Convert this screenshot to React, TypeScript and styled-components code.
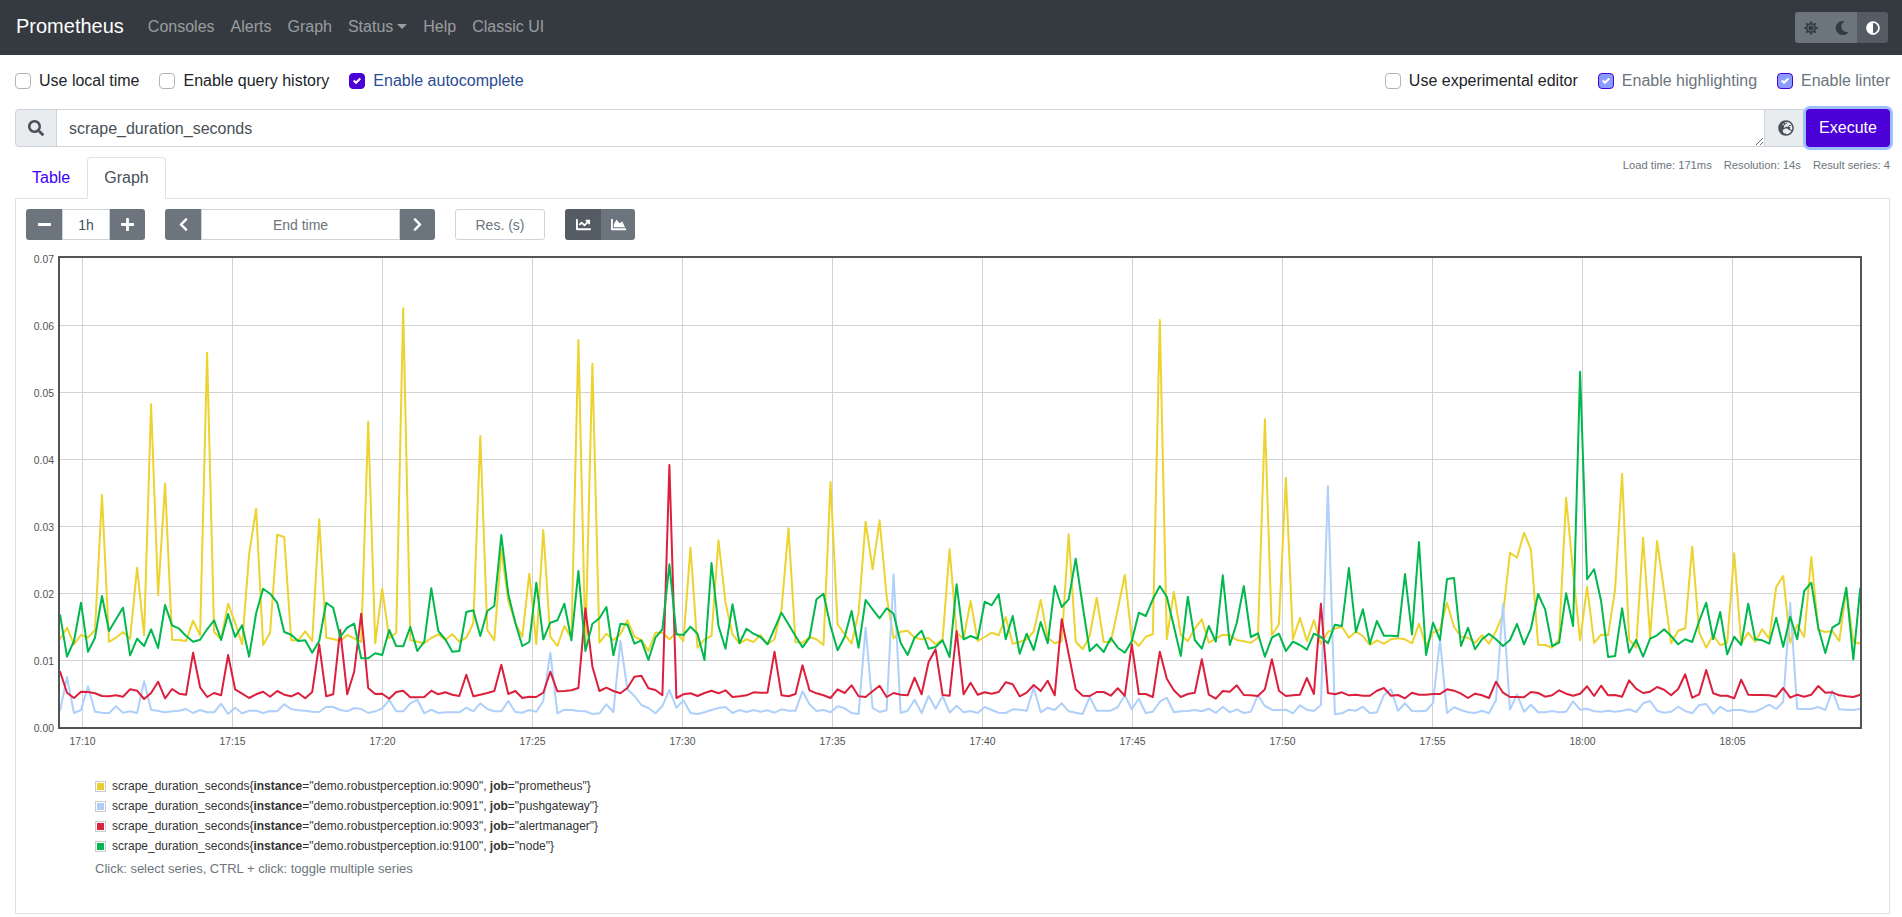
import styled, { createGlobalStyle } from 'styled-components'
import {
    FaAdjust,
    FaChartArea,
    FaChartLine,
    FaChevronLeft,
    FaChevronRight,
    FaGlobeEurope,
    FaMinus,
    FaMoon,
    FaPlus,
    FaSearch,
    FaSun,
} from 'react-icons/fa'

const GlobalStyle = createGlobalStyle`
    * {
        box-sizing: border-box;
    }
    body {
        margin: 0;
        background: #fff;
        color: #212529;
        font-family: "Liberation Sans", Arial, sans-serif;
        font-size: 16px;
        line-height: 1.5;
    }
`;

const Navbar = styled.nav`
    display: flex;
    align-items: center;
    height: 55px;
    padding: 0 14px 0 16px;
    background-color: #343a40;
`;

const Brand = styled.a`
    margin-right: 16px;
    margin-top: -3px;
    color: #fff;
    font-size: 20px;
    line-height: 30px;
`;

const NavLink = styled.a<{ $caret?: boolean }>`
    display: flex;
    align-items: center;
    padding: 0 8px;
    margin-top: -2px;
    color: rgba(255, 255, 255, 0.5);
    ${(p) => p.$caret && `
        &::after {
            content: '';
            margin-left: 4px;
            border-top: 5px solid currentColor;
            border-left: 5px solid transparent;
            border-right: 5px solid transparent;
        }
    `}
`;

const ThemeToggle = styled.div`
    display: flex;
    margin-left: auto;
    border-radius: 3px;
    overflow: hidden;
`;

const ThemeButton = styled.button<{ $active?: boolean }>`
    display: flex;
    align-items: center;
    justify-content: center;
    width: 31px;
    height: 31px;
    padding: 0;
    border: 0;
    background-color: ${(p) => (p.$active ? '#545b62' : '#6c757d')};
    color: ${(p) => (p.$active ? '#fff' : '#343a40')};
    font-size: 14px;
`;

const Main = styled.main`
    padding: 14px 12px 0 15px;
`;

const OptionsRow = styled.div`
    display: flex;
    justify-content: space-between;
    height: 24px;
`;

const OptionGroup = styled.div`
    display: flex;
    gap: 20px;
`;

const Option = styled.label<{ $color?: string }>`
    display: flex;
    align-items: center;
    gap: 8px;
    color: ${(p) => p.$color || '#212529'};
`;

const CheckBox = styled.span<{ $checked?: boolean; $disabled?: boolean }>`
    display: flex;
    align-items: center;
    justify-content: center;
    width: 16px;
    height: 16px;
    border-radius: 4px;
    border: 1px solid ${(p) => (p.$checked ? '#4a00d6' : '#adb5bd')};
    background-color: ${(p) => (p.$disabled ? '#8a9cff' : p.$checked ? '#4a00d6' : '#fff')};

    svg {
        width: 8px;
        height: 8px;
        fill: #fff;
    }
`;

const QueryRow = styled.div`
    display: flex;
    height: 38px;
    margin-top: 16px;
`;

const Addon = styled.div<{ $left?: boolean }>`
    display: flex;
    flex: none;
    align-items: center;
    justify-content: center;
    width: ${(p) => (p.$left ? '42px' : '41px')};
    border: 1px solid #ced4da;
    border-radius: ${(p) => (p.$left ? '4px 0 0 4px' : '0')};
    background-color: #e9ecef;
    color: #495057;
    ${(p) => (p.$left ? 'border-right-width: 1px;' : 'border-right: 0; border-left: 0;')}
`;

const QueryInput = styled.textarea`
    flex: 1;
    min-width: 0;
    height: 38px;
    padding: 7px 12px 5px;
    margin-left: -1px;
    border: 1px solid #ced4da;
    border-radius: 0;
    outline: 0;
    color: #495057;
    font: inherit;
    resize: vertical;
`;

const ExecuteButton = styled.button`
    position: relative;
    flex: none;
    width: 84px;
    height: 38px;
    border: 0;
    border-radius: 4px;
    background-color: #4a00d6;
    box-shadow: 0 0 0 3px #9dbffb;
    color: #fff;
    font: inherit;
`;

const TabRow = styled.div`
    display: flex;
    justify-content: space-between;
    margin-top: 10px;
    margin-bottom: -1px;
`;

const Tabs = styled.div`
    display: flex;
`;

const Tab = styled.a<{ $active?: boolean }>`
    position: relative;
    height: 42px;
    padding: 8px 16px;
    border: 1px solid ${(p) => (p.$active ? '#dee2e6' : 'transparent')};
    border-bottom-color: ${(p) => (p.$active ? '#fff' : 'transparent')};
    border-radius: 4px 4px 0 0;
    color: ${(p) => (p.$active ? '#495057' : '#4000ff')};
`;

const Stats = styled.div`
    display: flex;
    gap: 12px;
    color: #6c757d;
    font-size: 11.2px;
    line-height: 16px;
`;

const Panel = styled.section`
    height: 716px;
    padding: 10px;
    border: 1px solid #dee2e6;
`;

const Tools = styled.div`
    display: flex;
    gap: 20px;
    height: 31px;
`;

const ToolGroup = styled.div`
    display: flex;
`;

const ToolButton = styled.button<{ $active?: boolean; $wide?: number }>`
    display: flex;
    align-items: center;
    justify-content: center;
    width: ${(p) => p.$wide || 36}px;
    height: 31px;
    padding: 0;
    border: 0;
    background-color: ${(p) => (p.$active ? '#545b62' : '#6c757d')};
    color: #fff;
    font-size: 15px;

    &:first-child {
        border-radius: 3px 0 0 3px;
    }
    &:last-child {
        border-radius: 0 3px 3px 0;
    }
`;

const ToolInput = styled.input<{ $width: number; $alone?: boolean }>`
    width: ${(p) => p.$width}px;
    height: 31px;
    padding: 4px 8px;
    border: 1px solid #ced4da;
    border-radius: ${(p) => (p.$alone ? '3px' : '0')};
    outline: 0;
    color: #495057;
    font-family: inherit;
    font-size: 14px;
    text-align: center;

    &::placeholder {
        color: #6c757d;
        opacity: 1;
    }
`;

const ChartSvg = styled.svg`
    display: block;
    margin: 8px 0 0 -10px;
`;

const TickText = styled.text`
    fill: #545454;
    font-size: 10.4px;
`;

const Legend = styled.div`
    margin: 23px 0 0 69px;
    color: #333;
    font-size: 12px;
    line-height: 20px;
`;

const LegendRow = styled.div`
    display: flex;
    align-items: center;
    gap: 6px;
    height: 20px;
`;

const Swatch = styled.span<{ $color: string }>`
    width: 11px;
    height: 11px;
    padding: 1px;
    border: 1px solid #ccc;
    background-clip: content-box;
    background-color: ${(p) => p.$color};
`;

const LegendHint = styled.div`
    margin-top: 3px;
    color: #6c757d;
    font-size: 13px;
`;

// y of every sample as read off the reference, in 1/3 px below y=256
const yellow = [
    1150, 1115, 1165, 1137, 1145, 1122, 717, 1158, 1145, 1128,
    1148, 935, 1138, 445, 1017, 683, 1151, 1152, 1155, 1094,
    1138, 290, 1128, 1150, 1043, 1100, 1165, 895, 758, 1167,
    1130, 836, 843, 1153, 1153, 1126, 1155, 790, 1145, 1149,
    1155, 1137, 1147, 1158, 497, 1162, 998, 1147, 1130, 157,
    1152, 1157, 1162, 1146, 1135, 1152, 1135, 1157, 1145, 1102,
    540, 1122, 1153, 880, 1035, 1100, 1142, 953, 1165, 822,
    1142, 1170, 1110, 1147, 252, 1170, 323, 1160, 1133, 1152,
    1135, 1093, 1142, 1152, 1185, 1130, 1130, 1150, 1130, 1155,
    875, 1175, 1150, 1140, 853, 1040, 1135, 1162, 1150, 1158,
    1137, 1165, 1150, 1060, 817, 1158, 1160, 1143, 1150, 1167,
    678, 1105, 1135, 1163, 1070, 797, 940, 793, 1020, 1147,
    1127, 1124, 1145, 1150, 1146, 1165, 1150, 880, 1130, 1148,
    1035, 1155, 1143, 1130, 1138, 1083, 1163, 1158, 1150, 1127,
    1032, 1145, 1162, 1155, 835, 1157, 1180, 1140, 1025, 1158,
    1157, 1060, 957, 1148, 1170, 1142, 1135, 192, 1150, 1007,
    1137, 1156, 1118, 1090, 1160, 1148, 1136, 1138, 1152, 1156,
    1160, 1145, 490, 1138, 1105, 665, 1150, 1086, 1155, 1093,
    1163, 1128, 1118, 1112, 1145, 1127, 1140, 1167, 1153, 1163,
    1150, 1147, 1150, 1162, 1103, 1170, 1130, 1120, 1040, 1112,
    1142, 1145, 1160, 1138, 1163, 1125, 1075, 890, 905, 830,
    882, 1166, 1167, 1175, 1150, 725, 950, 1153, 992, 1161,
    1136, 1138, 1000, 653, 1150, 1175, 845, 1145, 855, 1005,
    1162, 1124, 1117, 872, 1130, 1175, 1137, 1168, 1160, 892,
    1163, 1130, 1157, 1120, 1148, 993, 960, 1160, 1107, 1143,
    903, 1122, 1128, 1125, 1155, 1000, 1157, 1163,
];

const blue = [
    1365, 1264, 1371, 1362, 1291, 1367, 1370, 1372, 1351, 1370,
    1366, 1371, 1276, 1361, 1365, 1369, 1366, 1364, 1359, 1371,
    1362, 1369, 1369, 1343, 1374, 1355, 1372, 1364, 1364, 1371,
    1365, 1366, 1345, 1359, 1363, 1364, 1367, 1368, 1352, 1353,
    1362, 1366, 1356, 1359, 1371, 1366, 1357, 1332, 1366, 1366,
    1342, 1331, 1372, 1361, 1371, 1369, 1369, 1369, 1355, 1366,
    1342, 1359, 1366, 1366, 1335, 1368, 1370, 1362, 1367, 1334,
    1190, 1372, 1361, 1362, 1365, 1366, 1374, 1372, 1345, 1368,
    1155, 1300, 1320, 1347, 1356, 1372, 1350, 1302, 1355, 1333,
    1371, 1374, 1369, 1362, 1356, 1353, 1371, 1362, 1368, 1362,
    1367, 1363, 1370, 1360, 1364, 1364, 1306, 1345, 1365, 1362,
    1369, 1351, 1357, 1371, 1374, 1115, 1356, 1368, 1363, 955,
    1371, 1364, 1331, 1371, 1320, 1358, 1320, 1370, 1349, 1369,
    1365, 1371, 1353, 1362, 1370, 1371, 1360, 1361, 1364, 1295,
    1369, 1355, 1362, 1342, 1366, 1370, 1374, 1323, 1364, 1364,
    1364, 1353, 1318, 1360, 1328, 1371, 1367, 1337, 1325, 1369,
    1366, 1365, 1362, 1366, 1358, 1371, 1352, 1369, 1360, 1371,
    1367, 1318, 1350, 1361, 1362, 1361, 1372, 1348, 1361, 1365,
    1347, 690, 1375, 1372, 1361, 1364, 1352, 1372, 1369, 1318,
    1300, 1364, 1342, 1365, 1366, 1364, 1342, 1150, 1371, 1354,
    1362, 1369, 1371, 1364, 1372, 1332, 1045, 1361, 1315, 1367,
    1346, 1369, 1369, 1365, 1369, 1367, 1336, 1361, 1358, 1366,
    1367, 1364, 1367, 1364, 1360, 1368, 1342, 1335, 1364, 1370,
    1367, 1352, 1365, 1372, 1347, 1344, 1373, 1352, 1365, 1362,
    1362, 1367, 1367, 1357, 1346, 1359, 1338, 1040, 1358, 1359,
    1359, 1353, 1362, 1305, 1360, 1361, 1362, 1358,
];

const red = [
    1246, 1310, 1326, 1307, 1308, 1312, 1320, 1321, 1318, 1322,
    1300, 1304, 1329, 1311, 1277, 1327, 1299, 1313, 1316, 1190,
    1294, 1323, 1311, 1318, 1197, 1300, 1313, 1326, 1315, 1307,
    1322, 1305, 1316, 1321, 1311, 1327, 1308, 1165, 1321, 1315,
    1122, 1315, 1247, 1073, 1296, 1314, 1313, 1328, 1308, 1304,
    1324, 1324, 1323, 1304, 1315, 1309, 1316, 1320, 1256, 1321,
    1316, 1311, 1305, 1226, 1314, 1305, 1326, 1322, 1323, 1310,
    1247, 1306, 1305, 1303, 1296, 1057, 1232, 1305, 1295, 1305,
    1312, 1296, 1262, 1259, 1297, 1302, 1318, 627, 1326, 1315,
    1312, 1320, 1311, 1304, 1312, 1303, 1323, 1321, 1318, 1309,
    1310, 1310, 1187, 1318, 1321, 1314, 1228, 1303, 1312, 1318,
    1326, 1300, 1311, 1288, 1321, 1323, 1306, 1289, 1323, 1311,
    1316, 1318, 1265, 1315, 1218, 1180, 1317, 1319, 1125, 1315,
    1280, 1316, 1309, 1313, 1308, 1279, 1285, 1321, 1310, 1287,
    1305, 1274, 1318, 1090, 1195, 1300, 1319, 1320, 1308, 1308,
    1319, 1297, 1319, 1165, 1314, 1314, 1323, 1187, 1268, 1303,
    1323, 1314, 1310, 1210, 1316, 1328, 1305, 1307, 1288, 1317,
    1318, 1320, 1300, 1210, 1304, 1320, 1318, 1316, 1266, 1314,
    1043, 1311, 1315, 1309, 1318, 1316, 1319, 1319, 1304, 1296,
    1319, 1317, 1327, 1310, 1316, 1316, 1314, 1314, 1300, 1304,
    1313, 1326, 1313, 1318, 1326, 1277, 1310, 1323, 1323, 1324,
    1308, 1311, 1322, 1318, 1303, 1313, 1319, 1313, 1291, 1320,
    1289, 1318, 1317, 1322, 1273, 1298, 1311, 1307, 1293, 1301,
    1318, 1299, 1255, 1325, 1315, 1242, 1312, 1319, 1319, 1327,
    1271, 1316, 1317, 1317, 1318, 1322, 1296, 1325, 1316, 1322,
    1316, 1290, 1310, 1309, 1318, 1321, 1323, 1316,
];

const green = [
    1075, 1202, 1155, 1040, 1187, 1145, 1020, 1125, 1090, 1055,
    1198, 1148, 1170, 1120, 1176, 1047, 1108, 1118, 1140, 1157,
    1151, 1120, 1093, 1152, 1074, 1143, 1108, 1202, 1072, 998,
    1013, 1040, 1128, 1136, 1155, 1153, 1190, 1155, 1040, 1055,
    1143, 1115, 1103, 1207, 1207, 1192, 1197, 1122, 1170, 1171,
    1113, 1185, 1157, 997, 1125, 1150, 1187, 1185, 1068, 1063,
    1140, 1065, 1050, 837, 1015, 1100, 1170, 1158, 980, 1150,
    1100, 1093, 1043, 1153, 945, 1185, 1103, 1087, 1053, 1198,
    1103, 1106, 1163, 1153, 1212, 1145, 1120, 925, 1135, 1137,
    1112, 1133, 1212, 921, 1110, 1178, 1045, 1162, 1118, 1133,
    1143, 1165, 1118, 1070, 1105, 1140, 1174, 1145, 1030, 1013,
    1110, 1183, 1143, 1065, 1175, 1032, 1060, 1087, 1057, 1073,
    1160, 1197, 1145, 1124, 1178, 1173, 1153, 1203, 985, 1150,
    1140, 1148, 1037, 1048, 1015, 1150, 1080, 1193, 1133, 1182,
    1098, 1162, 990, 1053, 1030, 908, 1050, 1185, 1165, 1188,
    1146, 1175, 1190, 1155, 1070, 1080, 1030, 990, 1022, 1110,
    1200, 1022, 1152, 1178, 1110, 1157, 958, 1167, 1100, 990,
    1143, 1132, 1202, 1145, 1133, 1185, 1157, 1167, 1181, 1133,
    1143, 1162, 1106, 1110, 936, 1128, 1060, 1163, 1095, 1139,
    1139, 1141, 954, 1135, 858, 1197, 1100, 1152, 969, 966,
    1170, 1115, 1180, 1150, 1133, 1150, 1170, 1152, 1104, 1165,
    1117, 1014, 1060, 1170, 1160, 1012, 1110, 347, 970, 940,
    1035, 1203, 1200, 1057, 1190, 1152, 1202, 1148, 1138, 1120,
    1140, 1165, 1150, 1158, 1095, 1040, 1150, 1068, 1195, 1142,
    1167, 1043, 1150, 1153, 1163, 1085, 1172, 1082, 1150, 1005,
    980, 1115, 1191, 1115, 1102, 995, 1210, 995,
];

const SERIES = [
    { color: '#ecd32f', swatch: '#e9cd2b', port: '9090', job: 'prometheus', data: yellow },
    { color: '#aed0fb', swatch: '#aecffa', port: '9091', job: 'pushgateway', data: blue },
    { color: '#dc1f3c', swatch: '#dc2340', port: '9093', job: 'alertmanager', data: red },
    { color: '#00b84d', swatch: '#00b84f', port: '9100', job: 'node', data: green },
];

const SVG_LEFT = 16;
const SVG_TOP = 248;
const toPath = (data: number[]) =>
    data
        .map((v, k) => {
            const x = 60 + k * 7.005 - SVG_LEFT;
            const y = 256 + v / 3 - SVG_TOP;
            return `${k === 0 ? 'M' : 'L'}${x.toFixed(1)} ${y.toFixed(1)}`;
        })
        .join('');

const Y_TICKS = ['0.00', '0.01', '0.02', '0.03', '0.04', '0.05', '0.06', '0.07'];
const X_TICKS = [
    '17:10', '17:15', '17:20', '17:25', '17:30', '17:35',
    '17:40', '17:45', '17:50', '17:55', '18:00', '18:05',
];

function Chart() {
    const x0 = 60 - SVG_LEFT;
    const x1 = 1860 - SVG_LEFT;
    const y0 = 727.5 - SVG_TOP;
    return (
        <ChartSvg width={1872} height={505}>
            {Y_TICKS.map((label, i) => {
                const y = y0 - i * 67;
                return (
                    <g key={label}>
                        {i > 0 && i < 7 && <line x1={x0} x2={x1} y1={y} y2={y} stroke="#d2d2d2" />}
                        <TickText x={38} y={y + 4} textAnchor="end">{label}</TickText>
                    </g>
                );
            })}
            {X_TICKS.map((label, i) => {
                const x = 66.5 + i * 150;
                return (
                    <g key={label}>
                        <line x1={x} x2={x} y1={10} y2={y0} stroke="#d2d2d2" />
                        <TickText x={x} y={497} textAnchor="middle">{label}</TickText>
                    </g>
                );
            })}
            {SERIES.map((s) => (
                <path key={s.port} d={toPath(s.data)} fill="none" stroke={s.color} strokeWidth={2} strokeLinejoin="round" />
            ))}
            <rect x={43} y={9} width={1802} height={471} fill="none" stroke="#545454" strokeWidth={2} />
        </ChartSvg>
    );
}

function Check({ checked, disabled }: { checked?: boolean; disabled?: boolean }) {
    return (
        <CheckBox $checked={checked} $disabled={disabled}>
            {checked && (
                <svg viewBox="0 0 8 8">
                    <path d="M6.564.75l-3.59 3.612-1.538-1.55L0 4.26l2.974 2.99L8 2.193z" />
                </svg>
            )}
        </CheckBox>
    );
}

function App() {
    return (
        <>
            <GlobalStyle />
            <Navbar>
                <Brand>Prometheus</Brand>
                <NavLink>Consoles</NavLink>
                <NavLink>Alerts</NavLink>
                <NavLink>Graph</NavLink>
                <NavLink $caret>Status</NavLink>
                <NavLink>Help</NavLink>
                <NavLink>Classic UI</NavLink>
                <ThemeToggle>
                    <ThemeButton><FaSun /></ThemeButton>
                    <ThemeButton><FaMoon /></ThemeButton>
                    <ThemeButton $active><FaAdjust /></ThemeButton>
                </ThemeToggle>
            </Navbar>
            <Main>
                <OptionsRow>
                    <OptionGroup>
                        <Option><Check />Use local time</Option>
                        <Option><Check />Enable query history</Option>
                        <Option $color="#2b4c94"><Check checked />Enable autocomplete</Option>
                    </OptionGroup>
                    <OptionGroup>
                        <Option><Check />Use experimental editor</Option>
                        <Option $color="#6c757d"><Check checked disabled />Enable highlighting</Option>
                        <Option $color="#6c757d"><Check checked disabled />Enable linter</Option>
                    </OptionGroup>
                </OptionsRow>
                <QueryRow>
                    <Addon $left><FaSearch /></Addon>
                    <QueryInput readOnly rows={1} value="scrape_duration_seconds" />
                    <Addon><FaGlobeEurope /></Addon>
                    <ExecuteButton>Execute</ExecuteButton>
                </QueryRow>
                <TabRow>
                    <Tabs>
                        <Tab>Table</Tab>
                        <Tab $active>Graph</Tab>
                    </Tabs>
                    <Stats>
                        <span>Load time: 171ms</span>
                        <span>Resolution: 14s</span>
                        <span>Result series: 4</span>
                    </Stats>
                </TabRow>
                <Panel>
                    <Tools>
                        <ToolGroup>
                            <ToolButton><FaMinus /></ToolButton>
                            <ToolInput $width={48} defaultValue="1h" />
                            <ToolButton $wide={35}><FaPlus /></ToolButton>
                        </ToolGroup>
                        <ToolGroup>
                            <ToolButton><FaChevronLeft /></ToolButton>
                            <ToolInput $width={199} placeholder="End time" />
                            <ToolButton $wide={35}><FaChevronRight /></ToolButton>
                        </ToolGroup>
                        <ToolInput $width={90} $alone placeholder="Res. (s)" />
                        <ToolGroup>
                            <ToolButton $active><FaChartLine /></ToolButton>
                            <ToolButton $wide={34}><FaChartArea /></ToolButton>
                        </ToolGroup>
                    </Tools>
                    <Chart />
                    <Legend>
                        {SERIES.map((s) => (
                            <LegendRow key={s.port}>
                                <Swatch $color={s.swatch} />
                                <span>
                                    scrape_duration_seconds{'{'}<b>instance</b>="demo.robustperception.io:{s.port}", <b>job</b>="{s.job}"{'}'}
                                </span>
                            </LegendRow>
                        ))}
                        <LegendHint>Click: select series, CTRL + click: toggle multiple series</LegendHint>
                    </Legend>
                </Panel>
            </Main>
        </>
    );
}

export default App
